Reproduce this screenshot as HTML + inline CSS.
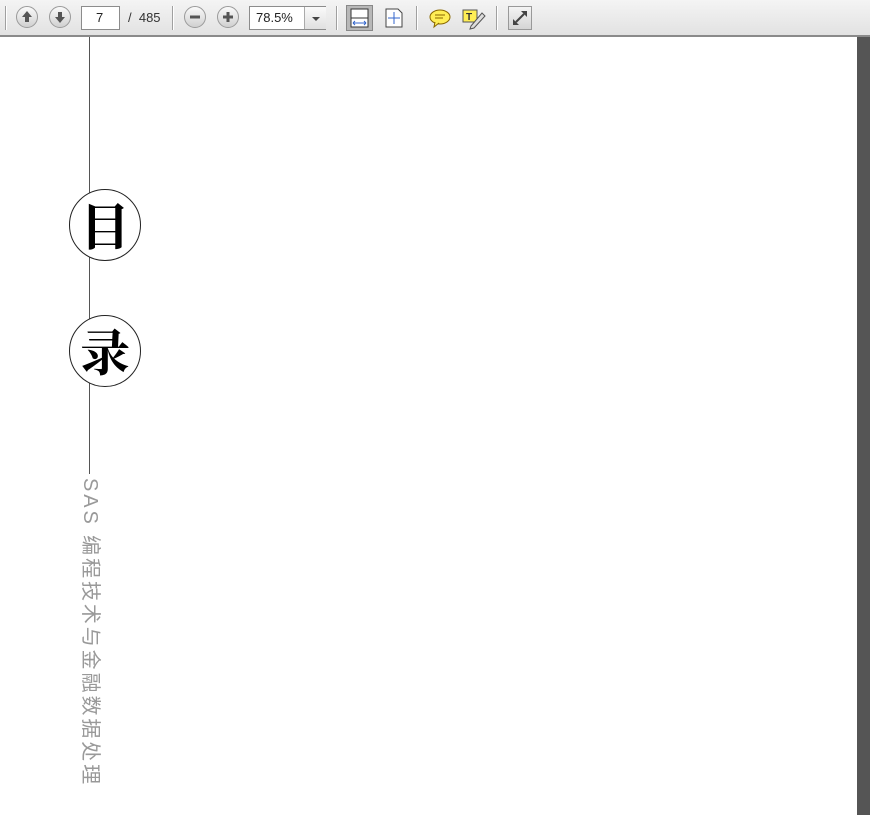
<!DOCTYPE html>
<html><head><meta charset="utf-8"><style>
body{margin:0;width:870px;height:815px;background:#fff;position:relative;overflow:hidden;font-family:"Liberation Sans","Noto Sans CJK SC",sans-serif}
.tb{position:absolute;left:0;top:0;width:870px;height:35px;background:linear-gradient(#f4f4f4,#e2e2e2);border-bottom:2px solid #8a8a8a}
.sep{position:absolute;top:6px;width:1px;height:24px;background:#a0a0a0;border-right:1px solid #fff}
.rb{position:absolute;top:6px;width:22px;height:22px;border-radius:50%;background:linear-gradient(#fafafa,#d0d0d0);border:1px solid #9a9a9a;box-sizing:border-box}
.box{position:absolute;top:6px;height:24px;background:#fff;border:1px solid #8c8c8c;box-sizing:border-box;font-size:13px;line-height:22px;color:#222}
.circ{position:absolute;left:69px;width:72px;height:72px;border:1px solid #222;border-radius:50%;box-sizing:border-box;background:#fff;font-family:"Noto Serif CJK SC",serif;font-weight:bold;font-size:50px;line-height:68px;text-align:center;color:#000}
</style></head><body>
<div class="tb">
<div class="sep" style="left:5px"></div>
<div class="rb" style="left:16px"><svg width="20" height="20"><path d="M10 4 L15 10 L12 10 L12 15 L8 15 L8 10 L5 10Z" fill="#555"/></svg></div>
<div class="rb" style="left:49px"><svg width="20" height="20"><path d="M10 16 L15 10 L12 10 L12 5 L8 5 L8 10 L5 10Z" fill="#555"/></svg></div>
<div class="box" style="left:81px;width:39px;padding-left:14px">7</div>
<div style="position:absolute;left:128px;top:10px;font-size:13px;color:#333">/&nbsp; 485</div>
<div class="sep" style="left:172px"></div>
<div class="rb" style="left:184px"><svg width="20" height="20"><rect x="5" y="8.5" width="10" height="3" fill="#555"/></svg></div>
<div class="rb" style="left:217px"><svg width="20" height="20"><rect x="5" y="8.5" width="10" height="3" fill="#555"/><rect x="8.5" y="5" width="3" height="10" fill="#555"/></svg></div>
<div class="box" style="left:249px;width:77px;padding-left:6px">78.5%<div style="position:absolute;left:54px;top:0;width:21px;height:22px;border-left:1px solid #aaa;background:linear-gradient(#fafafa,#e0e0e0)"><div style="position:absolute;left:7px;top:10px;border:4px solid transparent;border-top:4px solid #444;border-bottom:0"></div></div></div>
<div class="sep" style="left:336px"></div>
<div style="position:absolute;left:346px;top:5px;width:27px;height:26px;background:#b8b8b8;border:1px solid #888;box-sizing:border-box"><svg width="25" height="24"><rect x="4" y="3" width="17" height="18" fill="#fff" stroke="#333"/><line x1="4" y1="12" x2="21" y2="12" stroke="#333"/><path d="M6 17 H19 M6 17 l2-2 M6 17 l2 2 M19 17 l-2-2 M19 17 l-2 2" stroke="#3366cc"/></svg></div>
<svg style="position:absolute;left:382px;top:6px" width="24" height="24"><path d="M4 3 H16 L20 7 V21 H4Z" fill="#fff" stroke="#444"/><path d="M12 6 V18 M6 12 H18" stroke="#3366cc"/></svg>
<div class="sep" style="left:416px"></div>
<svg style="position:absolute;left:428px;top:7px" width="24" height="22"><ellipse cx="12" cy="10" rx="10" ry="7" fill="#ffee55" stroke="#886600"/><path d="M7 15 L6 20 L11 16" fill="#ffee55" stroke="#886600"/><path d="M7 8 H17 M7 11 H15" stroke="#886600"/></svg>
<svg style="position:absolute;left:461px;top:6px" width="26" height="24"><rect x="2" y="4" width="14" height="12" fill="#ffee55" stroke="#555"/><text x="5" y="14" font-size="10" font-weight="bold" fill="#333" font-family="Liberation Sans">T</text><path d="M10 20 L21 7 L24 10 L13 22 L9 23Z" fill="#ddd" stroke="#555"/></svg>
<div class="sep" style="left:496px"></div>
<div style="position:absolute;left:508px;top:6px;width:24px;height:24px;background:linear-gradient(#f4f4f4,#d4d4d4);border:1px solid #999;box-sizing:border-box"><svg width="22" height="22"><path d="M12 4 H18 V10Z M10 18 H4 V12Z" fill="#444"/><path d="M15 7 L7 15" stroke="#444" stroke-width="2"/></svg></div>
</div>
<div style="position:absolute;left:857px;top:37px;width:13px;height:778px;background:#555"></div>
<div style="position:absolute;left:89px;top:37px;width:1px;height:437px;background:#555"></div>
<div class="circ" style="top:189px">目</div>
<div class="circ" style="top:315px">录</div>
<div style="position:absolute;left:102px;top:478px;transform-origin:0 0;transform:rotate(90deg);font-size:20px;letter-spacing:2.9px;color:#999;line-height:24px;height:24px;white-space:nowrap">SAS 编程技术与金融数据处理</div>
</body></html>
